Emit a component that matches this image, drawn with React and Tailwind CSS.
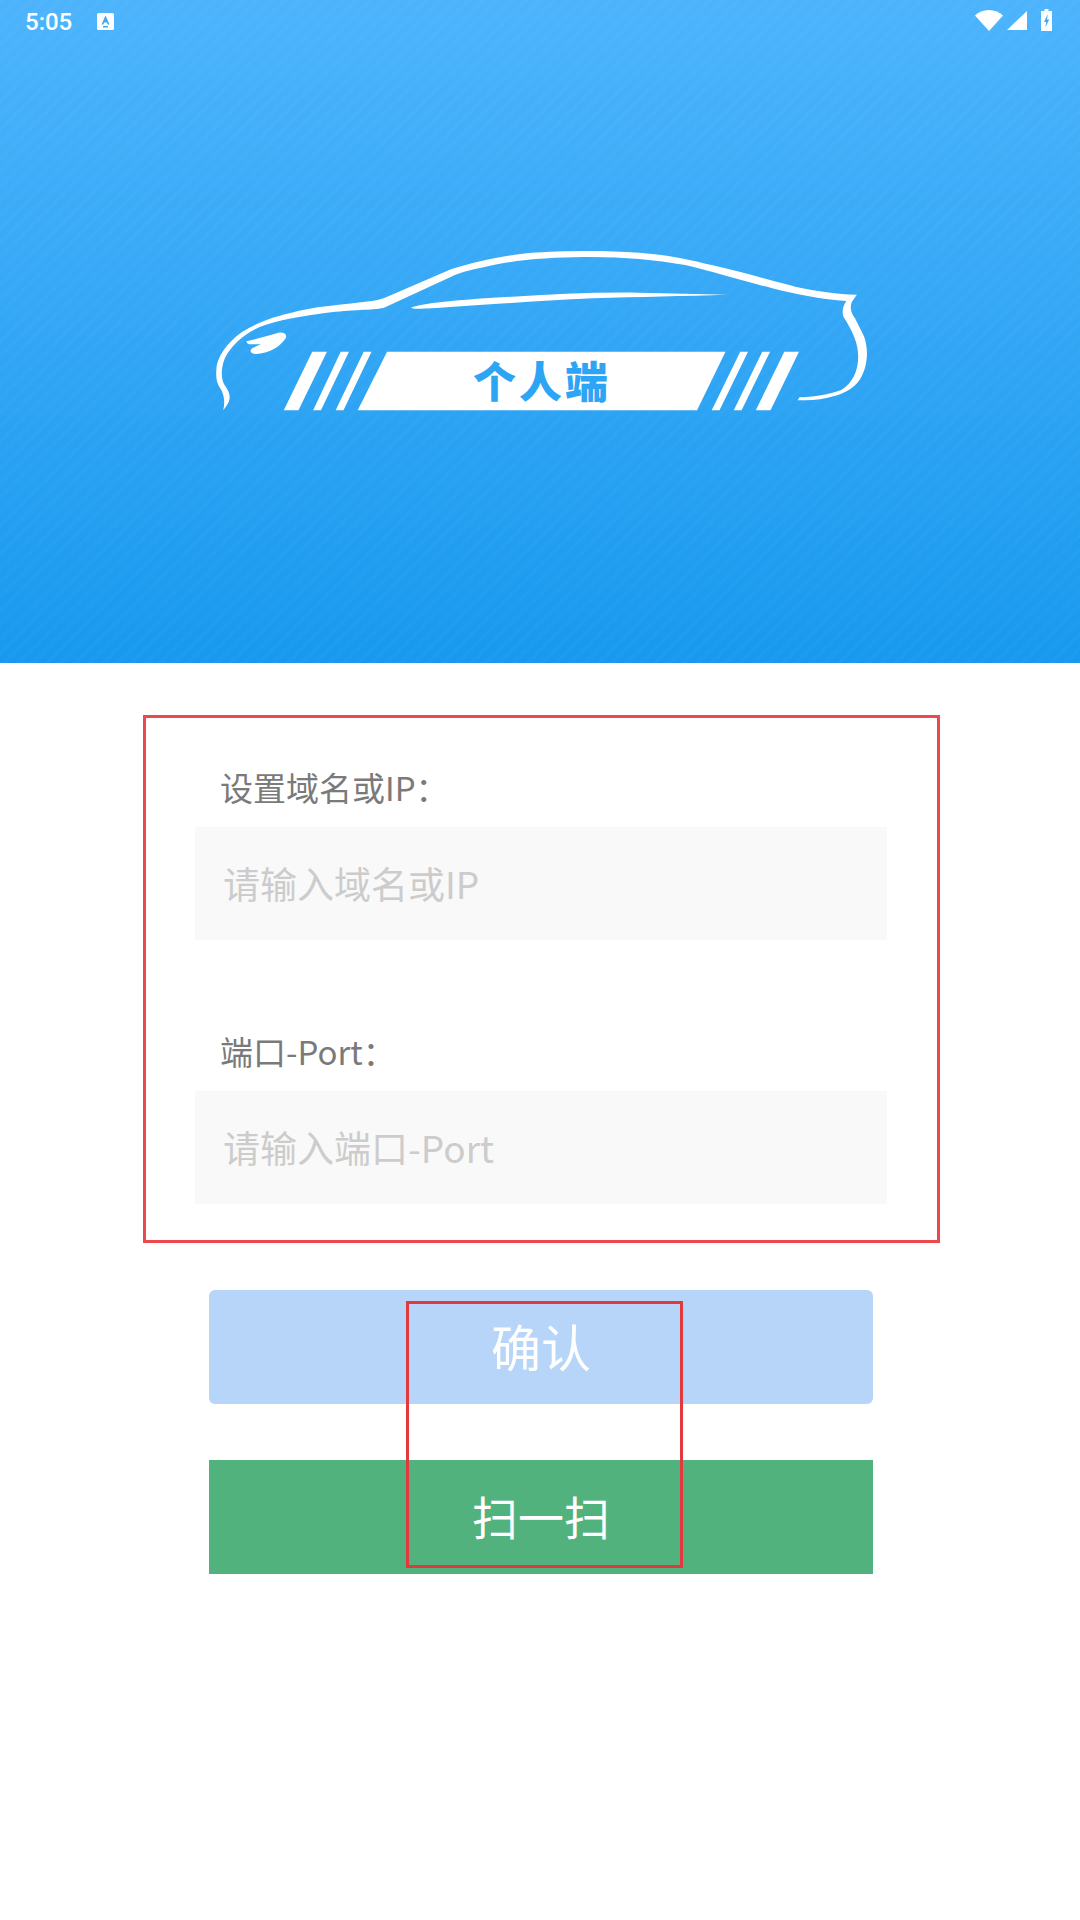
import React from "react";

const cjk = "font-['Noto_Sans_CJK_SC','Noto_Sans',sans-serif]";

function CarLogo() {
  return (
    <svg width="720" height="220" viewBox="0 0 1568 660" preserveAspectRatio="none" fill="#fff" className="block">
      <path d="M94 571 C98 550 97 530 90 510 C82 495 78 480 79 455 C78 415 100 370 135 336 C175 303 215 283 300 262 C350 252 400 248 430 240 L445 234 L590 148 C640 126 700 108 760 99 C830 92 920 90 1000 98 C1060 104 1100 116 1160 136 C1230 158 1290 183 1340 200 C1390 214 1430 222 1474 224 L1463 246 C1458 265 1462 280 1470 295 L1490 350 C1500 390 1498 440 1480 480 C1465 510 1440 525 1410 533 C1390 540 1365 541 1345 541 L1349 532 C1375 531 1410 526 1440 510 C1465 490 1477 450 1477 410 C1477 370 1465 335 1447 295 C1440 280 1443 260 1451 243 C1400 240 1340 222 1290 205 C1220 180 1160 155 1100 135 C1030 118 960 110 880 111 C810 112 740 118 680 136 C650 145 625 152 600 164 L443 264 C420 270 370 270 320 278 C270 287 215 299 175 320 C140 340 110 377 97 417 C88 450 90 478 97 495 C108 515 114 535 100 560 Z" />
      <path d="M503 263 C530 250 600 240 700 232 C800 224 900 216 1000 218 L1192 224 C1100 228 1000 230 900 235 C800 241 700 251 620 258 C570 263 530 267 510 266 Z" />
      <path d="M144 364 C165 358 195 345 215 338 C228 336 234 344 230 355 C220 378 195 400 168 402 C153 402 150 392 158 384 L176 373 C165 373 155 373 148 372 Z" />
      <polygon points="288,395 320,395 258,571 226,571" />
      <polygon points="350,395 368,395 307,571 290,571" />
      <polygon points="400,395 417,395 356,571 339,571" />
      <polygon points="451,395 1188,395 1126,571 387,571" />
      <polygon points="1220,395 1237,395 1175,571 1158,571" />
      <polygon points="1268,395 1285,395 1223,571 1206,571" />
      <polygon points="1316,395 1348,395 1286,571 1254,571" />
    </svg>
  );
}

function StatusBar() {
  return (
    <div className="flex h-[44px] items-center text-white">
      <span className="ml-[25px] w-[72px] font-['Roboto',sans-serif] text-[24px] font-medium leading-none">5:05</span>
      <svg width="17" height="17" viewBox="0 0 17 17" className="mt-[-1px]">
        <rect width="17" height="17" rx="1.5" fill="#fff" />
        <path d="M8.5 2.5 L12.5 11.5 H10.6 L9.9 9.6 H7.1 L6.4 11.5 H4.5 Z" fill="#3ea9f5" />
        <rect x="6" y="13" width="5" height="1.5" fill="#3ea9f5" />
      </svg>
      <div className="ml-auto flex items-center">
        <svg width="28" height="21" viewBox="0 0 28 21" className="mt-[-4px]">
          <path d="M14 21 L0 5.5 C3.5 2.2 8.5 0 14 0 C19.5 0 24.5 2.2 28 5.5 Z" fill="#fff" />
        </svg>
        <svg width="20" height="19" viewBox="0 0 20 19" className="ml-[4px] mt-[-3px]">
          <polygon points="20,0 20,19 0,19" fill="#fff" />
        </svg>
        <svg width="11" height="22" viewBox="0 0 11 22" className="ml-[14px] mr-[28px] mt-[-5px]">
          <path d="M3.5 0 H7.5 V2 H11 V22 H0 V2 H3.5 Z" fill="#fff" />
          <path d="M6.8 5 L3 13 H5.2 L4.4 18.5 L8.2 10.5 H6 Z" fill="#3ea9f5" />
        </svg>
      </div>
    </div>
  );
}

function Field({ label, placeholder, className }) {
  return (
    <div className={className}>
      <div className="ml-[74px] h-[67px] text-[33px] leading-[55px] text-[#7a7a7a]">{label}</div>
      <div className="ml-[49px] mr-[50px] flex h-[113px] items-center bg-[#f9f9f9] pl-[28px] text-[37px] leading-none text-[#cccccc]">
        {placeholder}
      </div>
    </div>
  );
}

export default function App() {
  return (
    <div className={`relative h-[1920px] w-[1080px] overflow-hidden bg-white ${cjk}`}>
      <header className="relative h-[663px] bg-[repeating-linear-gradient(135deg,rgba(255,255,255,0.018)_0_4px,transparent_4px_10px),linear-gradient(180deg,#4db4fc,#1899ee)]">
        <StatusBar />
        <div className="relative ml-[180px] mt-[176px] w-[720px]">
          <CarLogo />
          <span className="absolute left-[293px] top-[129px] whitespace-nowrap text-[43px] font-black leading-[60px] tracking-[3px] text-[#2ea5f4]">
            个人端
          </span>
        </div>
      </header>

      <section className="ml-[143px] mt-[52px] h-[528px] w-[797px] border-[3px] border-[#ec484d] pt-[42px]">
        <Field label="设置域名或IP：" placeholder="请输入域名或IP" />
        <Field label="端口-Port：" placeholder="请输入端口-Port" className="mt-[84px]" />
      </section>

      <div className="ml-[209px] mt-[47px] flex w-[664px] flex-col gap-[56px] text-white">
        <button className="flex h-[114px] items-center justify-center rounded-[6px] bg-[#b7d4f9] pb-[4px] text-[50px]">确认</button>
        <button className="flex h-[114px] items-center justify-center bg-[#52b27d] pb-[4px] text-[46px]">扫一扫</button>
      </div>

      <div className="absolute left-[406px] top-[1301px] h-[267px] w-[277px] border-[3px] border-[#e0393e]" />
    </div>
  );
}
